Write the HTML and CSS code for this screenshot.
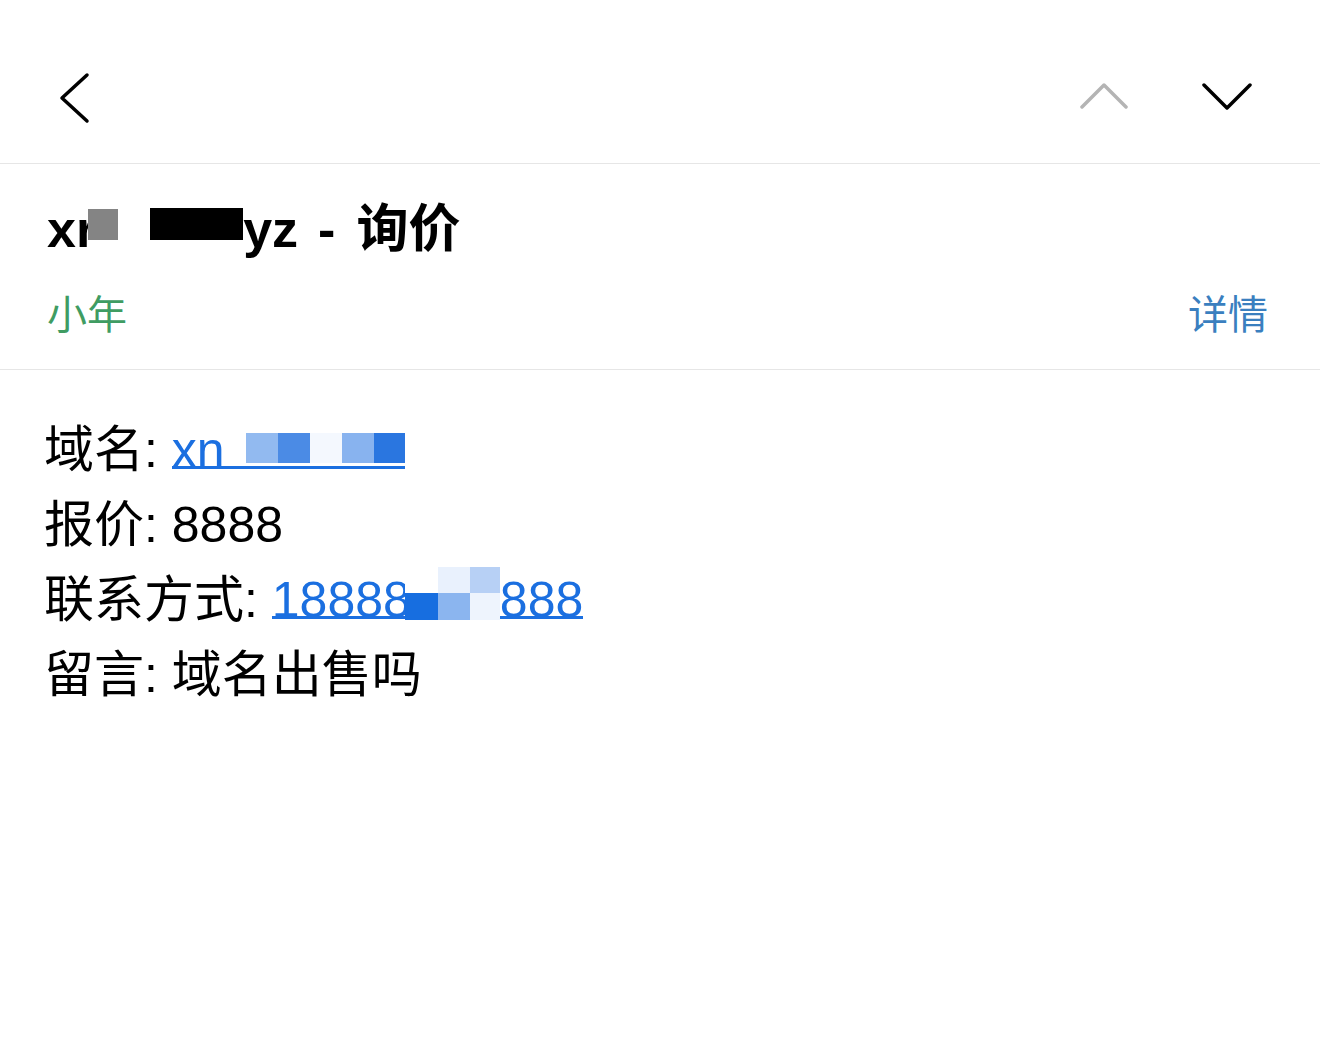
FILE: index.html
```html
<!DOCTYPE html>
<html lang="zh-CN">
<head>
<meta charset="UTF-8">
<meta name="viewport" content="width=device-width, initial-scale=1.0">
<title>询价</title>
<link rel="stylesheet" href="styles.css">
</head>
<body>

<div class="topbar">
    <svg class="back" width="34" height="52" viewBox="0 0 34 52">
        <polyline points="29,3 4,26 29,49" />
    </svg>
    <div class="nav-arrows">
        <svg class="arrow-up" width="50" height="28" viewBox="0 0 50 28">
            <polyline points="2,25 24,3 46,25" />
        </svg>
        <svg class="arrow-down" width="50" height="28" viewBox="0 0 50 28">
            <polyline points="2,3 25,26 48,3" />
        </svg>
    </div>
</div>

<div class="mail-head">
    <h1 class="subject">xr<span class="mask mask-gray"></span><span class="mask mask-black"></span>yz<span class="dash">-</span>询价</h1>
    <div class="sender-row">
        <span class="sender">小年</span>
        <a class="details" href="#">详情</a>
    </div>
</div>

<div class="mail-body">
    <p>域名: <a class="link" href="#">xn<span class="pix pix-gap"></span><span class="pix c1"></span><span class="pix c2"></span><span class="pix c0"></span><span class="pix c3"></span><span class="pix c4"></span></a></p>
    <p>报价: 8888</p>
    <p>联系方式: <a class="link" href="#">18888<span class="col col-a"></span><span class="col col-b"></span><span class="col col-c"></span>888</a></p>
    <p>留言: 域名出售吗</p>
</div>

</body>
</html>
```

FILE: styles.css
```css
body {
    margin: 0;
    padding: 0;
    background-color: #fff;
    color: #000;
    font-family: "Liberation Sans", "Noto Sans CJK SC", sans-serif;
}

/* top navigation */
.topbar {
    height: 164px;
    box-sizing: border-box;
    padding: 32px 68px 0 58px;
    display: flex;
    align-items: center;
    justify-content: space-between;
    border-bottom: 1px solid #e6e6e6;
}

.topbar svg polyline {
    fill: none;
    stroke-width: 3.5;
    stroke-linecap: round;
    stroke-linejoin: round;
}

.back polyline,
.arrow-down polyline {
    stroke: #000;
}

.arrow-up polyline {
    stroke: #b4b4b4;
}

.nav-arrows {
    display: flex;
    align-items: center;
    gap: 72px;
    margin-top: -4px;
}

/* subject + sender */
.mail-head {
    padding: 34px 52px 30px 47px;
    border-bottom: 1px solid #e6e6e6;
}

.subject {
    margin: 0;
    font-size: 52px;
    line-height: 62px;
    font-weight: bold;
}

.dash {
    margin: 0 21px 0 20px;
}

.mask {
    display: inline-block;
    vertical-align: 7px;
}

.mask-gray {
    width: 30px;
    height: 31px;
    margin-left: -8px;
    background: #848484;
}

.mask-black {
    width: 93px;
    height: 32px;
    margin-left: 32px;
    background: #000;
}

.sender-row {
    margin-top: 31px;
    display: flex;
    justify-content: space-between;
    font-size: 40px;
    line-height: 48px;
}

.sender {
    color: #3f9c62;
}

.details {
    color: #3a7fbf;
    text-decoration: none;
}

/* message body */
.mail-body {
    padding: 43px 44px;
    font-size: 50px;
    line-height: 75px;
}

.mail-body p {
    margin: 0;
}

.link {
    color: #1b6fe0;
    text-decoration: none;
    background: linear-gradient(#1b6fe0, #1b6fe0) no-repeat;
    background-size: 100% 3px;
    background-position: 0 calc(100% - 9px);
}

.pix {
    display: inline-block;
    width: 32px;
    height: 30px;
    vertical-align: 4px;
}

.pix-gap { width: 21px; }
.c0 { background: #f4f8fe; }
.c1 { background: #92baf0; }
.c2 { background: #4b8be5; }
.c3 { background: #88b3ef; }
.c4 { background: #2a76e0; width: 31px; }

.col {
    display: inline-block;
    width: 32px;
    height: 53px;
    vertical-align: -3px;
}

.col-a {
    margin-left: -6px;
    width: 33px;
    background: linear-gradient(#fff 50%, #176ee0 50%);
}

.col-b {
    background: linear-gradient(#e9f1fd 50%, #8bb5ef 50%);
}

.col-c {
    width: 30px;
    background: linear-gradient(#b7d0f5 50%, #eef4fd 50%);
}
```
